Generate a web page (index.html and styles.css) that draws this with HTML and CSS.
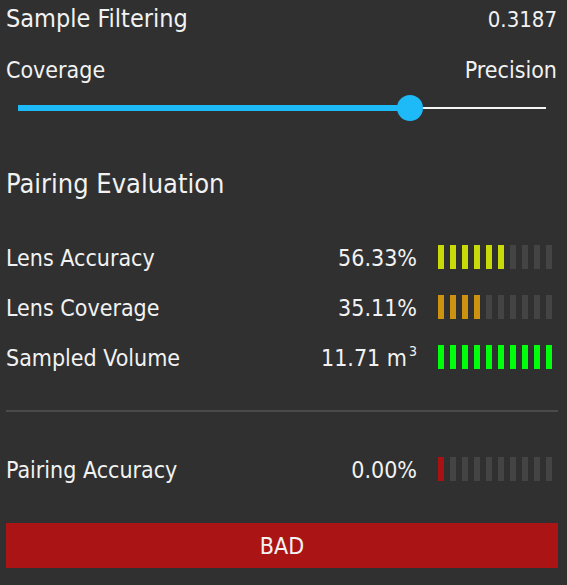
FILE: index.html
```html
<!DOCTYPE html>
<html>
<head>
<meta charset="utf-8">
<link rel="stylesheet" href="styles.css">
</head>
<body>
<div class="panel">
  <div class="header">
    <span class="title">Sample Filtering</span>
    <span class="num">0.3187</span>
  </div>
  <div class="ends">
    <span>Coverage</span>
    <span>Precision</span>
  </div>
  <div class="slider">
    <div class="fill" style="width: 74.2%"></div>
    <div class="rest"></div>
    <div class="knob" style="left: 74.2%"></div>
  </div>

  <div class="section-title">Pairing Evaluation</div>

  <div class="rows">
    <div class="row">
      <span class="label">Lens Accuracy</span>
      <span class="value">56.33%</span>
      <div class="meter yellow">
        <i class="on"></i><i class="on"></i><i class="on"></i><i class="on"></i><i class="on"></i><i class="on"></i><i></i><i></i><i></i><i></i>
      </div>
    </div>
    <div class="row">
      <span class="label">Lens Coverage</span>
      <span class="value">35.11%</span>
      <div class="meter orange">
        <i class="on"></i><i class="on"></i><i class="on"></i><i class="on"></i><i></i><i></i><i></i><i></i><i></i><i></i>
      </div>
    </div>
    <div class="row">
      <span class="label">Sampled Volume</span>
      <span class="value">11.71 m<sup>3</sup></span>
      <div class="meter green">
        <i class="on"></i><i class="on"></i><i class="on"></i><i class="on"></i><i class="on"></i><i class="on"></i><i class="on"></i><i class="on"></i><i class="on"></i><i class="on"></i>
      </div>
    </div>
  </div>

  <div class="divider"></div>

  <div class="row">
    <span class="label">Pairing Accuracy</span>
    <span class="value">0.00%</span>
    <div class="meter red">
      <i class="on"></i><i></i><i></i><i></i><i></i><i></i><i></i><i></i><i></i><i></i>
    </div>
  </div>

  <div class="button">BAD</div>
</div>
</body>
</html>
```

FILE: styles.css
```css
html, body {
  margin: 0;
  padding: 0;
  background: #303030;
}
body {
  font-family: "DejaVu Sans Condensed", "DejaVu Sans", sans-serif;
  font-stretch: condensed;
  color: #f2f2f2;
}
.panel {
  width: 552px;
  padding: 0 9px 0 6px;
}
.header {
  display: flex;
  justify-content: space-between;
  align-items: baseline;
  height: 34px;
  line-height: 37px;
}
.title {
  font-size: 25px;
}
.num {
  font-size: 22px;
  margin-right: 1px;
}
.ends {
  display: flex;
  justify-content: space-between;
  font-size: 23px;
  line-height: 32px;
  margin-top: 20px;
  padding-right: 1px;
}
.slider {
  position: relative;
  height: 26px;
  margin: 9px 12px 0 12px;
}
.rest {
  position: absolute;
  left: 0;
  right: 0;
  top: 12px;
  height: 2px;
  background: #f5f5f5;
  z-index: 0;
}
.fill {
  position: absolute;
  left: 0;
  top: 10px;
  height: 6px;
  background: #1eb9f7;
  z-index: 1;
}
.knob {
  position: absolute;
  top: 0;
  width: 26px;
  height: 26px;
  margin-left: -13px;
  border-radius: 50%;
  background: #1eb9f7;
  z-index: 2;
}
.section-title {
  font-size: 27px;
  line-height: 36px;
  margin-top: 45px;
}
.rows {
  margin-top: 30px;
}
.row {
  display: flex;
  align-items: center;
  height: 50px;
  font-size: 23px;
  padding-top: 2px;
  box-sizing: border-box;
}
.label {
  flex: 1;
}
.value {
  margin-right: 21px;
}
.value sup {
  font-size: 14px;
  vertical-align: 0;
  position: relative;
  top: -10px;
  margin-left: 2px;
}
.meter {
  display: flex;
  gap: 6px;
  width: 114px;
  margin-right: 6px;
  margin-top: -2px;
}
.meter i {
  display: block;
  width: 6px;
  height: 24px;
  background: #444444;
}
.meter.yellow i.on { background: #c8da08; }
.meter.orange i.on { background: #cd9210; }
.meter.green i.on { background: #00ff0a; }
.meter.red i.on { background: #a81212; }
.divider {
  height: 2px;
  background: #4a4a4a;
  margin: 28px 0 32px 0;
}
.button {
  margin-top: 29px;
  height: 45px;
  line-height: 47px;
  background: #ab1414;
  text-align: center;
  font-size: 23px;
}
```
